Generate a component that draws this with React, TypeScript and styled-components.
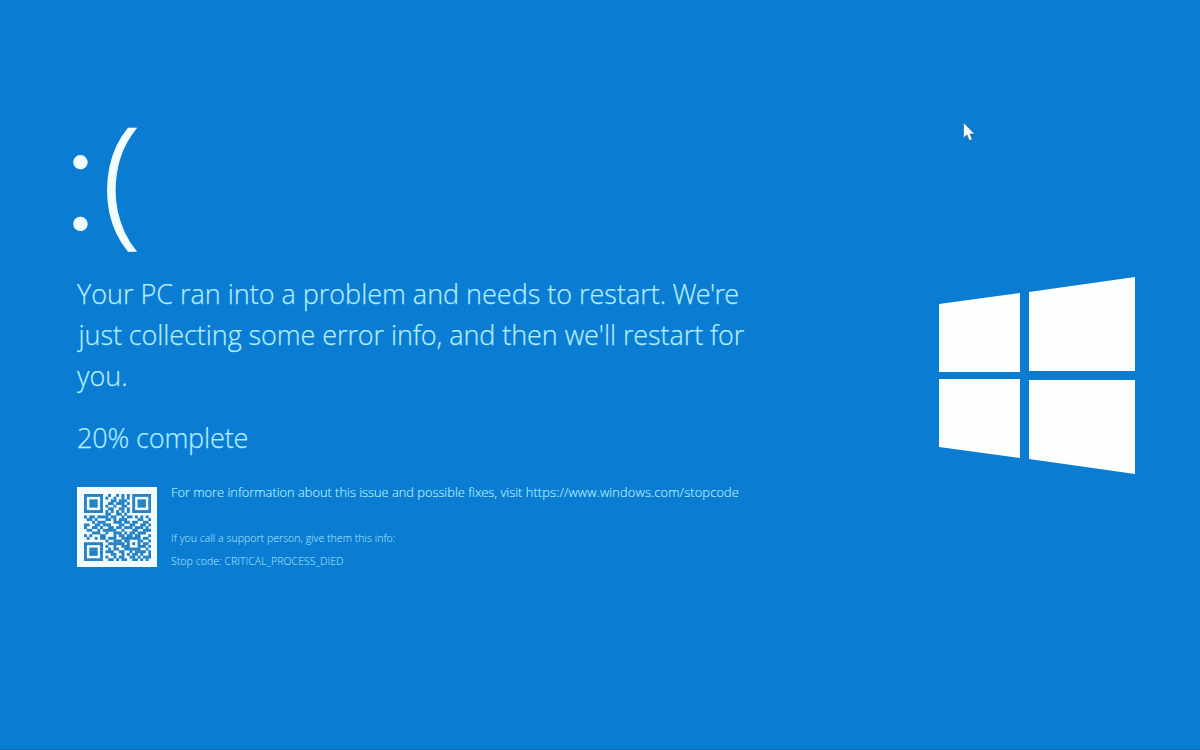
import React from "react";
import styled, { createGlobalStyle } from "styled-components";

const GlobalStyle = createGlobalStyle`
  html, body { margin: 0; padding: 0; background: #0a7cd2; }
`;

const Screen = styled.main`
  position: relative;
  box-sizing: border-box;
  display: flex;
  justify-content: space-between;
  width: 1200px;
  height: 750px;
  padding: 104px 65px 0 77px;
  overflow: hidden;
  background: #0a7cd2;
  border-bottom: 1px solid #0869b8;
  color: #b4edff;
  font-family: "Open Sans", "Noto Sans", sans-serif;
  font-weight: 300;
`;

const Report = styled.section`
  display: flex;
  flex-direction: column;
  width: 700px;
`;

const Face = styled.div`
  display: flex;
  height: 169px;
  margin-left: -15px;
  color: #f2fdff;
  font-size: 141px;
  line-height: 141px;
`;

const Eyes = styled.span`
  width: 40px;
  font-family: Lato, sans-serif;
  font-size: 154px;
  font-weight: 300;
  line-height: 133px;
`;

const Mouth = styled.span`
  -webkit-text-stroke: 1.4px currentColor;
`;

const Line = styled.span<{ $spacing?: number; $indent?: number }>`
  display: block;
  width: max-content;
  padding-left: ${(p) => p.$indent ?? 0}px;
  white-space: nowrap;
  letter-spacing: ${(p) => p.$spacing ?? 0}px;
`;

const Run = styled.span<{ $spacing: number }>`
  letter-spacing: ${(p) => p.$spacing}px;
`;

const Message = styled.h1`
  margin: 0;
  font-size: 27px;
  font-weight: 300;
  line-height: 41px;
  -webkit-text-stroke: 0.25px currentColor;
`;

const Progress = styled.p`
  margin: 21px 0 0;
  font-size: 27px;
  line-height: 41px;
  -webkit-text-stroke: 0.25px currentColor;
`;

const Details = styled.div`
  display: flex;
  gap: 14px;
  margin-top: 29px;
`;

const CodeCard = styled.div`
  display: flex;
  align-items: center;
  justify-content: center;
  width: 80px;
  height: 80px;
  background: #f2fcff;
`;

const Info = styled.div`
  display: flex;
  flex-direction: column;
`;

const Help = styled.p`
  margin: -5px 0 25px;
  font-size: 12.8px;
  line-height: 20px;
  -webkit-text-stroke: 0.15px currentColor;
`;

const Support = styled.p`
  margin: 0;
  font-size: 10.5px;
  line-height: 23.3px;
`;

const Logo = styled.svg`
  width: 196px;
  height: 198px;
  margin-top: 172px;
`;

const Pointer = styled.svg`
  position: absolute;
  left: 962px;
  top: 121px;
  width: 14px;
  height: 21px;
`;

const modules = [
  "1111111001001010101111111",
  "1000001010010010101000001",
  "1011101000110111001011101",
  "1011101001101110101011101",
  "1011101010010011001011101",
  "1000001001100110101000001",
  "1111111010101010101111111",
  "0000000011001101000000000",
  "1011011110110010110101010",
  "0110100011010111000011001",
  "0001011100011101101100110",
  "1100110111000110011001101",
  "1001101001101101110111010",
  "0110010111110010001100111",
  "0001110010011101011011100",
  "1010001100010110110110001",
  "0100101101110011111110110",
  "0000000010011101100011001",
  "1111111001111110101010110",
  "1000001010010011100011101",
  "1011101001011001111110010",
  "1011101011100110010111101",
  "1011101000110010101101001",
  "1000001010010110011010111",
  "1111111001101011001101010",
];

const StopCode = () => (
  <svg width="67" height="67" viewBox="0 0 25 25" role="img" aria-label="QR code">
    {modules.map((row, y) =>
      [...row].map((cell, x) =>
        cell === "1" ? (
          <rect key={`${x}-${y}`} x={x} y={y} width="1.08" height="1.08" fill="#217fc4" />
        ) : null
      )
    )}
  </svg>
);

export default function App() {
  return (
    <>
      <GlobalStyle />
      <Screen>
        <Report>
          <Face>
            <Eyes>:</Eyes>
            <Mouth>(</Mouth>
          </Face>
          <Message>
            <Line $spacing={-0.02}>
              Your PC ran into a problem and needs to restart.<Run $spacing={-0.7}> We're</Run>
            </Line>
            <Line $spacing={-0.08} $indent={1.5}>
              just collecting some error info, and then we'll restart for
            </Line>
            <Line>you.</Line>
          </Message>
          <Progress>
            <Line $spacing={-0.15}>20% complete</Line>
          </Progress>
          <Details>
            <CodeCard>
              <StopCode />
            </CodeCard>
            <Info>
              <Help>
                <Line $spacing={0.01}>
                  For more information about this issue and possible fixes, visit{" "}
                  <Run $spacing={0.16}>https://www.windows.com/stopcode</Run>
                </Line>
              </Help>
              <Support>
                <Line $spacing={0.05}>If you call a support person, give them this info:</Line>
              </Support>
              <Support>
                <Line $spacing={0.06}>Stop code: CRITICAL_PROCESS_DIED</Line>
              </Support>
            </Info>
          </Details>
        </Report>
        <Logo viewBox="0 0 196 198" fill="#fdffff">
          <path d="M0 28 81 17V96H0ZM90 16 196 1V95H90ZM0 103H81V182L0 171ZM90 104H196V198L90 183Z" />
        </Logo>
        <Pointer viewBox="0 0 14 21">
          <path
            d="M1.5 1.5V17L5 13.8 7.3 19.5 10.3 18.4 8 13H12.6Z"
            fill="#f6fcff"
            stroke="#2b5f8c"
            strokeWidth="0.6"
          />
        </Pointer>
      </Screen>
    </>
  );
}
